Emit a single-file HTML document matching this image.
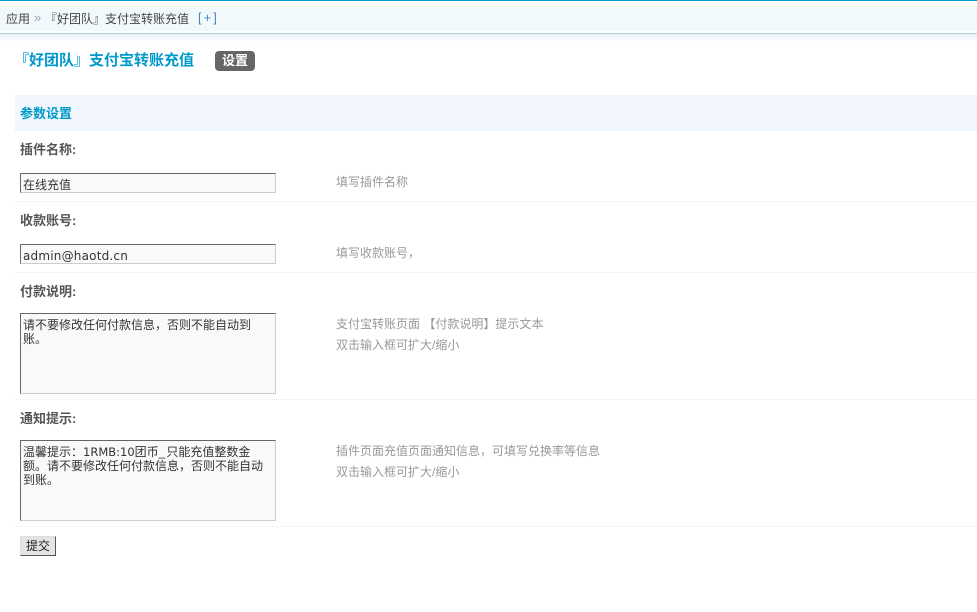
<!DOCTYPE html>
<html lang="zh-CN">
<head>
<meta charset="utf-8">
<title>支付宝转账充值</title>
<style>
html,body{margin:0;padding:0;background:#fff;}
body{width:977px;height:612px;position:relative;overflow:hidden;font:12px/14px "Liberation Sans","WenQuanYi Zen Hei","Noto Sans CJK SC",sans-serif;color:#444;}
.a{position:absolute;white-space:nowrap;}
.l{position:absolute;left:15px;right:0;height:0;border-top:1px dotted #deeffb;}
.b{position:absolute;left:20px;font-size:13px;font-weight:bold;color:#555;line-height:14px;white-space:nowrap;}
.box{position:absolute;left:20px;width:254px;background:#f9f9f9;border:1px solid;border-color:#666 #ccc #ccc #666;color:#333;padding:0;}
.box div{position:absolute;left:2px;white-space:pre;}
.t{position:absolute;left:336px;color:#999;white-space:nowrap;line-height:14px;}
</style>
</head>
<body>
<div class="a" style="left:0;top:0;width:977px;height:1px;background:#0099cc"></div>
<div class="a" style="left:0;top:6px;width:977px;height:25px;background:#f2f9fd"></div>
<div class="a" style="left:0;top:33px;width:977px;height:1px;background:#b5cfd9"></div>
<div class="a" style="left:0;top:34px;width:977px;height:8px;background:linear-gradient(#e8f1f7,#fff)"></div>

<div class="a" style="left:6px;top:12px;color:#444">应用</div>
<div class="a" style="left:34px;top:11px;color:#8aa6bd;font-size:13px">»</div>
<div class="a" style="left:45px;top:12px;color:#444">『好团队』支付宝转账充值</div>
<div class="a" style="left:198px;top:11px;color:#4a86b5;font-size:13px;letter-spacing:2px">[+]</div>

<div class="a" style="left:14px;top:53px;font-size:15px;line-height:16px;font-weight:bold;color:#0099cc">『好团队』支付宝转账充值</div>
<div class="a" style="left:215px;top:51px;width:40px;height:20px;background:#666;border-radius:4px;color:#fff;font-size:13px;font-weight:bold;text-align:center;line-height:20px">设置</div>

<div class="a" style="left:15px;top:95px;right:0;height:35px;background:#f2f7fd"></div>
<div class="a" style="left:20px;top:107px;font-size:13px;font-weight:bold;color:#0099cc">参数设置</div>
<div class="l" style="top:130px"></div>

<div class="b" style="top:143px">插件名称:</div>
<div class="box" style="top:173px;height:18px"><div style="top:4px">在线充值</div></div>
<div class="t" style="top:175px">填写插件名称</div>
<div class="l" style="top:201px"></div>

<div class="b" style="top:214px">收款账号:</div>
<div class="box" style="top:244px;height:18px"><div style="top:4px;font-family:'DejaVu Sans',sans-serif;letter-spacing:.2px">admin@haotd.cn</div></div>
<div class="t" style="top:246px">填写收款账号&#xFF0C;</div>
<div class="l" style="top:272px"></div>

<div class="b" style="top:285px">付款说明:</div>
<div class="box" style="top:313px;height:79px"><div style="top:4px;line-height:14px">请不要修改任何付款信息&#xFF0C;否则不能自动到
账。</div></div>
<div class="t" style="top:317px">支付宝转账页面 【付款说明】提示文本</div>
<div class="t" style="top:338px">双击输入框可扩大/缩小</div>
<div class="l" style="top:399px"></div>

<div class="b" style="top:412px">通知提示:</div>
<div class="box" style="top:440px;height:79px"><div style="top:4px;line-height:14px">温馨提示&#xFF1A;<span style="font-family:'DejaVu Sans',sans-serif;font-size:11.5px">1RMB:10</span>团币<span style="letter-spacing:1px">_</span>只能充值整数金
额。请不要修改任何付款信息&#xFF0C;否则不能自动
到账。</div></div>
<div class="t" style="top:444px">插件页面充值页面通知信息&#xFF0C;可填写兑换率等信息</div>
<div class="t" style="top:465px">双击输入框可扩大/缩小</div>
<div class="l" style="top:526px"></div>

<div class="a" style="left:20px;top:536px;width:34px;height:18px;background:#e4e4e4;border:1px solid;border-color:#ddd #555 #555 #ddd;color:#222;text-align:center;line-height:19px">提交</div>
</body>
</html>
